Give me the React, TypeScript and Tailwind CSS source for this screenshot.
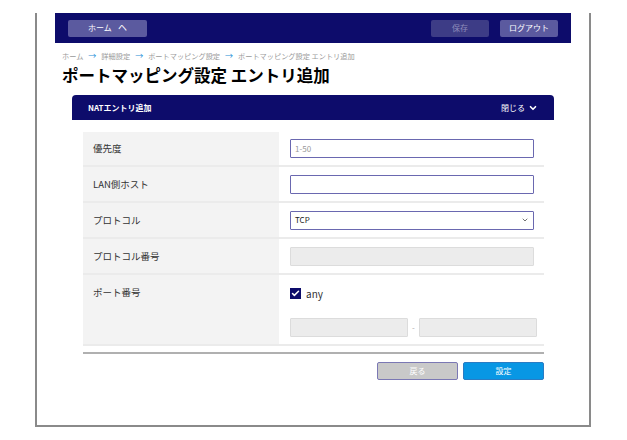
import { ChevronDown, Check } from "lucide-react";

const font = { fontFamily: '"Noto Sans CJK JP", "Noto Sans", sans-serif' };

function Crumb({ items }: { items: string[] }) {
  return (
    <div className="flex items-center gap-[5px] text-[7.2px] leading-[12px] text-[#9a9a9a]">
      {items.map((t, i) => (
        <span key={t} className="flex items-center gap-[5px]">
          {i > 0 && <span className="text-[#1e90d8] text-[8px]">→</span>}
          <span>{t}</span>
        </span>
      ))}
    </div>
  );
}

function Row({ label, children, tall, h = "h-[36px]" }: { label: string; children: React.ReactNode; tall?: boolean; h?: string }) {
  return (
    <div className={`flex border-b-2 border-[#ebebeb] ${tall ? "h-[71px]" : h}`}>
      <div className={`w-[196px] shrink-0 bg-[#f3f3f3] pl-[10px] text-[9.5px] text-[#333] flex ${tall ? "items-start pt-[10px]" : "items-center"}`}>
        {label}
      </div>
      <div className={`flex-1 pl-[11px] pr-[10px] flex ${tall ? "flex-col pt-[11px]" : "items-center"}`}>{children}</div>
    </div>
  );
}

export default function App() {
  return (
    <div className="w-[627px] h-[440px] bg-white overflow-hidden" style={font}>
      <div className="ml-[35px] mt-[13px] w-[556px] h-[414px] border-l-2 border-r-2 border-b-2 border-[#8a8a8a]">
        <div className="mx-[18px]">
          <div className="h-[30px] bg-[#0d0c6b] flex items-center px-[13px]">
            <div className="w-[79px] h-[17px] rounded-[2px] bg-[#5b5a9f] flex items-center justify-center text-[8px] text-white gap-[6px]">
              <span>ホーム</span>
              <span className="text-[9px]">ヘ</span>
            </div>
            <div className="ml-auto w-[58px] h-[17px] rounded-[2px] bg-[#3d3c86] flex items-center justify-center text-[8px] text-[#8d8cba]">
              保存
            </div>
            <div className="ml-[11px] w-[58px] h-[17px] rounded-[2px] bg-[#5b5a9f] flex items-center justify-center text-[8px] text-white">
              ログアウト
            </div>
          </div>

          <div className="pl-[7px] pt-[7px]">
            <Crumb items={["ホーム", "詳細設定", "ポートマッピング設定", "ポートマッピング設定 エントリ追加"]} />
            <h1 className="mt-[2px] text-[16.5px] font-bold text-black leading-[22px]">ポートマッピング設定 エントリ追加</h1>
          </div>

          <div className="mx-[17px] mt-[9px]">
            <div className="h-[25px] rounded-t-[4px] bg-[#0d0c6b] flex items-center px-[16px] text-white text-[8px] font-bold">
              <span>NATエントリ追加</span>
              <span className="ml-auto flex items-center gap-[3px] font-normal">
                閉じる
                <ChevronDown className="w-[10px] h-[10px]" strokeWidth={4} />
              </span>
            </div>

            <div className="ml-[11px] mr-[10px] mt-[12px]">
              <Row label="優先度" h="h-[35px]">
                <div className="w-full h-[19px] border border-[#6a68b0] rounded-[1px] flex items-center px-[4px] text-[8px] text-[#999]">1-50</div>
              </Row>
              <Row label="LAN側ホスト">
                <div className="w-full h-[19px] border border-[#6a68b0] rounded-[1px]" />
              </Row>
              <Row label="プロトコル">
                <div className="w-full h-[19px] border border-[#6a68b0] rounded-[1px] flex items-center px-[4px] text-[8px] text-[#222]">
                  <span>TCP</span>
                  <ChevronDown className="ml-auto w-[8px] h-[8px] text-[#555]" strokeWidth={2.5} />
                </div>
              </Row>
              <Row label="プロトコル番号">
                <div className="w-full h-[19px] border border-[#dcdcdc] bg-[#ececec] rounded-[1px]" />
              </Row>
              <Row label="ポート番号" tall>
                <div className="flex items-center gap-[5px] h-[14px]">
                  <span className="w-[11px] h-[11px] bg-[#0d0c6b] flex items-center justify-center">
                    <Check className="w-[9px] h-[9px] text-white" strokeWidth={4} />
                  </span>
                  <span className="text-[10px] text-[#333]">any</span>
                </div>
                <div className="mt-[18px] flex items-center">
                  <div className="w-[118px] h-[19px] border border-[#dcdcdc] bg-[#ececec] rounded-[1px]" />
                  <span className="w-[11px] text-center text-[8px] text-[#aaa]">-</span>
                  <div className="w-[118px] h-[19px] border border-[#dcdcdc] bg-[#ececec] rounded-[1px]" />
                </div>
              </Row>
              <div className="mt-[6px] h-[2px] bg-[#b0b0b0]" />
              <div className="flex justify-end gap-[5px] mt-[8px]">
                <div className="w-[81px] h-[18px] rounded-[2px] border border-[#7b78b4] bg-[#c9c9c9] flex items-center justify-center text-[8px] text-white">
                  戻る
                </div>
                <div className="w-[81px] h-[18px] rounded-[2px] border border-[#2a7cc4] bg-[#0897e4] flex items-center justify-center text-[8px] text-white">
                  設定
                </div>
              </div>
            </div>
          </div>
        </div>
      </div>
    </div>
  );
}
